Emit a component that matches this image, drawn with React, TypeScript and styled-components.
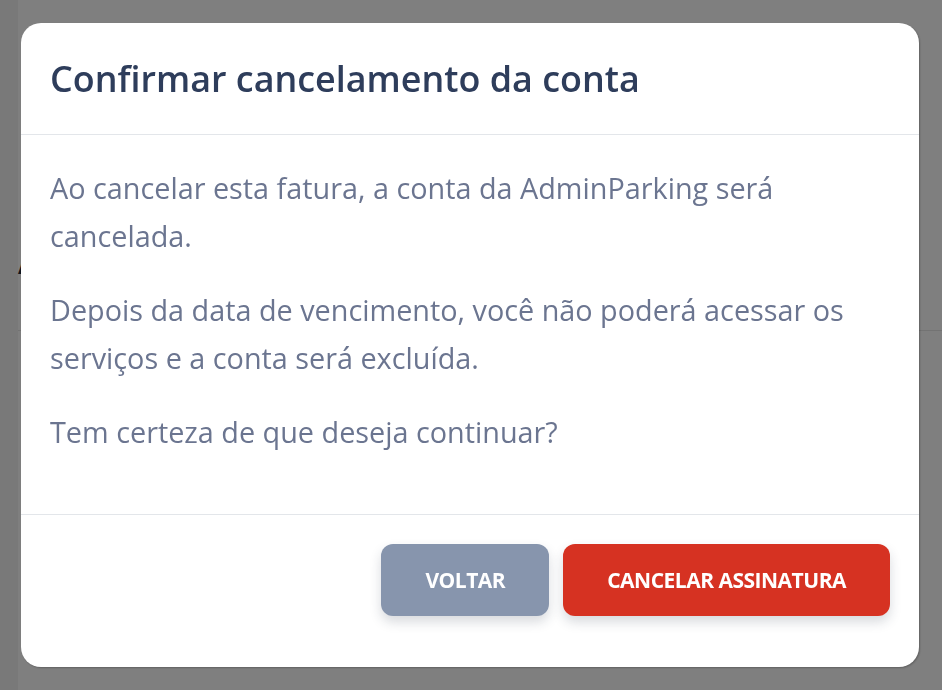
import React from "react";
import styled, { createGlobalStyle } from "styled-components";

const GlobalStyle = createGlobalStyle`
  html, body {
    margin: 0;
    padding: 0;
    height: 100%;
    background: #ffffff;
    font-family: "Open Sans", "Noto Sans", sans-serif;
  }
  #root {
    height: 100%;
  }
`;

// page behind the overlay
const Page = styled.div`
  display: flex;
  height: 690px;
  overflow: hidden;
`;

const Sidebar = styled.aside`
  width: 18px;
  flex-shrink: 0;
  background: #f3f3f3;
`;

const Main = styled.main`
  flex: 1;
  display: flex;
  flex-direction: column;
  padding-top: 246px;
`;

const PageTitle = styled.h2`
  margin: 0 0 48px;
  font-size: 26px;
  font-weight: 700;
  color: #1f2a3c;
`;

const Panel = styled.section`
  flex: 1;
  border-top: 1px solid #e6e6e6;
`;

const Overlay = styled.div`
  position: fixed;
  inset: 0;
  background: rgba(0, 0, 0, 0.5);
  display: flex;
  align-items: flex-start;
  justify-content: flex-start;
  padding: 23px 0 0 21px;
`;

const Modal = styled.div`
  width: 898px;
  background: #ffffff;
  border-radius: 20px;
  box-shadow: 1px 1px 2px rgba(0, 0, 0, 0.25);
  display: flex;
  flex-direction: column;
  overflow: hidden;
`;

const Header = styled.header`
  height: 112px;
  box-sizing: border-box;
  padding: 0 29px;
  display: flex;
  align-items: center;
  border-bottom: 1px solid #e3e6ea;
`;

const Title = styled.h1`
  margin: 0;
  font-size: 35.9px;
  font-weight: 600;
  color: #2e3d5b;
`;

const Body = styled.div`
  padding: 29px 29px 32px;
  border-bottom: 1px solid #e3e6ea;
`;

const Text = styled.p`
  margin: 0 0 26px;
  font-size: 28.8px;
  line-height: 48px;
  color: #6b7590;
`;

const Footer = styled.footer`
  display: flex;
  justify-content: flex-end;
  gap: 14px;
  padding: 29px 29px 51px;
`;

const Button = styled.button<{ $variant: "muted" | "danger" }>`
  height: 72px;
  padding: 0 44px;
  border: none;
  border-radius: 12px;
  font-family: "Open Sans", "Noto Sans", sans-serif;
  font-size: 21px;
  font-weight: 700;
  letter-spacing: -0.5px;
  color: #ffffff;
  cursor: pointer;
  background: ${(p) => (p.$variant === "danger" ? "#d63222" : "#8795ad")};
  box-shadow: 0 6px 12px rgba(40, 50, 70, 0.18);
`;

const App: React.FC = () => {
  return (
    <>
      <GlobalStyle />
      <Page>
        <Sidebar />
        <Main>
          <PageTitle>Assinatura</PageTitle>
          <Panel />
        </Main>
      </Page>
      <Overlay>
        <Modal role="dialog">
          <Header>
            <Title>Confirmar cancelamento da conta</Title>
          </Header>
          <Body>
            <Text>
              Ao cancelar esta fatura, a conta da AdminParking será cancelada.
            </Text>
            <Text>
              Depois da data de vencimento, você não poderá acessar os serviços
              e a conta será excluída.
            </Text>
            <Text>Tem certeza de que deseja continuar?</Text>
          </Body>
          <Footer>
            <Button $variant="muted">VOLTAR</Button>
            <Button $variant="danger">CANCELAR ASSINATURA</Button>
          </Footer>
        </Modal>
      </Overlay>
    </>
  );
};

export default App;
